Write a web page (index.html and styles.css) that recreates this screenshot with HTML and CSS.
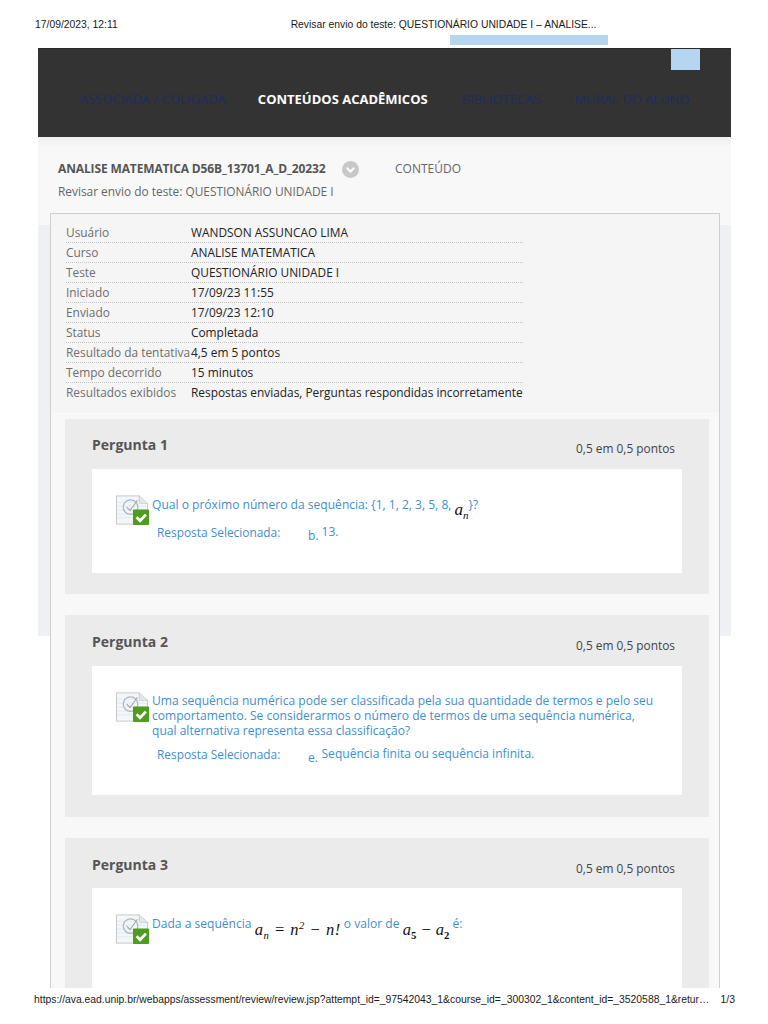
FILE: index.html
```html
<!DOCTYPE html>
<html lang="pt-BR">
<head>
<meta charset="utf-8">
<title>Revisar envio do teste</title>
<link rel="stylesheet" href="styles.css">
</head>
<body>
<svg class="defs" width="0" height="0" aria-hidden="true">
  <symbol id="qicon" viewBox="0 0 36 32">
    <path d="M1.5 1.5H25L33.5 9V30.5H1.5Z" fill="#f4f6f8" stroke="#c4c6c8"/>
    <path d="M25 1.5V9H33.5" fill="#e4e6e8" stroke="#c4c6c8"/>
    <path d="M2 8H32M2 12H32M2 16H32M2 20H32M2 24H32" stroke="#dcebf5"/>
    <circle cx="16" cy="13" r="7.5" fill="none" stroke="#b4b6b8" stroke-width="1.3"/>
    <path d="M12 13l3.5 3.5L23 6" fill="none" stroke="#a8aaac" stroke-width="1.2"/>
    <rect x="18.5" y="15.5" width="16.5" height="16" rx="1" fill="#4f9d1e"/>
    <path d="M22.2 23.5l3.6 3.6 6-6.4" fill="none" stroke="#fff" stroke-width="2.8"/>
  </symbol>
</svg>
<div class="page">
  <header class="print-head">
    <span>17/09/2023, 12:11</span>
    <span class="print-title">Revisar envio do teste: QUESTIONÁRIO UNIDADE I – ANALISE...</span>
    <span class="mark mark-top"></span>
  </header>
  <main class="sheet">
    <nav class="nav">
      <a>ASSOCIADA / COLIGADA</a>
      <a class="active">CONTEÚDOS ACADÊMICOS</a>
      <a>BIBLIOTECAS</a>
      <a>MURAL DO ALUNO</a>
      <span class="mark mark-nav"></span>
    </nav>
    <div class="crumbs">
      <div class="crumb-row">
        <strong>ANALISE MATEMATICA D56B_13701_A_D_20232</strong>
        <svg class="chev" viewBox="0 0 17 17" aria-hidden="true"><circle cx="8.5" cy="8.5" r="8.5" fill="#c8c8c8"/><path d="M4.8 6.8l3.7 3.7 3.7-3.7" fill="none" stroke="#fff" stroke-width="2"/></svg>
        <span class="crumb-link">CONTEÚDO</span>
      </div>
      <div class="crumb-sub">Revisar envio do teste: QUESTIONÁRIO UNIDADE I</div>
    </div>
    <div class="backdrop">
      <section class="panel">
        <dl class="details">
          <div><dt>Usuário</dt><dd>WANDSON ASSUNCAO LIMA</dd></div>
          <div><dt>Curso</dt><dd>ANALISE MATEMATICA</dd></div>
          <div><dt>Teste</dt><dd>QUESTIONÁRIO UNIDADE I</dd></div>
          <div><dt>Iniciado</dt><dd>17/09/23 11:55</dd></div>
          <div><dt>Enviado</dt><dd>17/09/23 12:10</dd></div>
          <div><dt>Status</dt><dd>Completada</dd></div>
          <div><dt>Resultado da tentativa</dt><dd>4,5 em 5 pontos</dd></div>
          <div><dt>Tempo decorrido</dt><dd>15 minutos</dd></div>
          <div><dt>Resultados exibidos</dt><dd>Respostas enviadas, Perguntas respondidas incorretamente</dd></div>
        </dl>
        <div class="questions">
          <article class="q q1">
            <div class="q-head"><h2>Pergunta 1</h2><span>0,5 em 0,5 pontos</span></div>
            <div class="q-body">
              <div class="q-line">
                <svg class="qicon"><use href="#qicon"/></svg>
                <p>Qual o próximo número da sequência: {1, 1, 2, 3, 5, 8, <span class="math an">a<sub>n</sub></span>}?</p>
              </div>
              <div class="answer"><span class="a-label">Resposta Selecionada:</span><span class="a-letter">b.</span><span>13.</span></div>
            </div>
          </article>
          <article class="q q2">
            <div class="q-head"><h2>Pergunta 2</h2><span>0,5 em 0,5 pontos</span></div>
            <div class="q-body">
              <div class="q-line">
                <svg class="qicon"><use href="#qicon"/></svg>
                <p>Uma sequência numérica pode ser classificada pela sua quantidade de termos e pelo seu comportamento. Se considerarmos o número de termos de uma sequência numérica, qual alternativa representa essa classificação?</p>
              </div>
              <div class="answer"><span class="a-label">Resposta Selecionada:</span><span class="a-letter">e.</span><span>Sequência finita ou sequência infinita.</span></div>
            </div>
          </article>
          <article class="q q3">
            <div class="q-head"><h2>Pergunta 3</h2><span>0,5 em 0,5 pontos</span></div>
            <div class="q-body">
              <div class="q-line">
                <svg class="qicon"><use href="#qicon"/></svg>
                <p>Dada a sequência <span class="math big eq1">a<sub>n</sub> <i>=</i> n<sup>2</sup> <i>−</i> n!</span> o valor de <span class="math big">a<sub class="num">5</sub> <i>−</i> a<sub class="num">2</sub></span> é:</p>
              </div>
            </div>
          </article>
        </div>
      </section>
    </div>
  </main>
  <footer class="print-foot">
    <span class="url">https://ava.ead.unip.br/webapps/assessment/review/review.jsp?attempt_id=_97542043_1&amp;course_id=_300302_1&amp;content_id=_3520588_1&amp;retur…</span>
    <span>1/3</span>
  </footer>
</div>
</body>
</html>
```

FILE: styles.css
```css
* { box-sizing: border-box; }
html, body { margin: 0; padding: 0; background: #fff; }
.defs { position: absolute; }
.page {
  width: 768px;
  height: 1024px;
  overflow: hidden;
  display: flex;
  flex-direction: column;
  font-family: "Open Sans", sans-serif;
  font-size: 11.88px;
  color: #333;
  position: relative;
}
.print-head {
  flex: none;
  height: 48px;
  padding: 18px 0 0 35px;
  display: flex;
  font: 10.35px/13px "Liberation Sans", sans-serif;
  color: #1a1a1a;
  position: relative;
}
.print-title { margin-left: 173px; }
.mark { position: absolute; background: #b5d5f0; }
.mark-top { left: 450px; top: 35px; width: 158px; height: 10px; }
.sheet {
  flex: 1;
  min-height: 0;
  overflow: hidden;
  margin: 0 37px 0 38px;
}
.nav {
  height: 89px;
  background: #333;
  border-top: 1px solid #2a2a2a;
  padding: 40px 0 0 42px;
  display: flex;
  gap: 32px;
  font-size: 13px;
  line-height: 20px;
  color: #1d2c66;
  position: relative;
}
.nav .active { color: #fff; font-weight: 700; margin-right: 2px; }
.nav a:nth-child(4) { margin-left: 2px; }
.mark-nav { right: 31px; top: 0; width: 29px; height: 21px; }
.crumbs {
  height: 88px;
  background: linear-gradient(#eeeeee, #f8f8f8 10px);
  padding: 23px 0 0 20px;
  line-height: 18px;
  color: #666;
}
.crumb-row { display: flex; align-items: center; font-size: 12px; }
.crumb-row strong { color: #555; font-weight: 700; letter-spacing: -.13px; width: 284px; white-space: nowrap; }
.chev { width: 17px; height: 17px; }
.crumb-link { margin-left: 36px; }
.crumb-sub { margin-top: 4px; }
.backdrop {
  display: flow-root;
  background: #eef0f4;
  height: 411px;
  padding: 0 11px 0 12px;
}
.panel {
  height: 790px;
  margin-top: -12px;
  position: relative;
  background: #f8f8f8;
  border: 1px solid #cfcfcf;
  border-bottom: 0;
}
.details {
  margin: 0;
  padding: 9px 0 0 15px;
  height: 200px;
  width: 100%;
  background: #f5f5f5;
  border-bottom: 1px solid #fafafa;
}
.details div {
  display: flex;
  width: 457px;
  height: 20px;
  line-height: 19px;
  border-bottom: 1px dotted #c4c4c4;
  white-space: nowrap;
}
.details div:last-child { border-bottom: 0; }
.details dt { width: 125px; color: #6e6e6e; flex: none; }
.details dd { margin: 0; color: #222; }
.questions { padding: 5px 10px 0 14px; }
.q { background: #ebebeb; margin-bottom: 21px; padding: 0 27px; }
.q1 { height: 175px; }
.q2 { height: 202px; }
.q3 { height: 300px; }
.q-head {
  height: 50px;
  display: flex;
  justify-content: space-between;
  align-items: flex-start;
  padding: 17px 7px 0 0;
  color: #444;
}
.q2 .q-head { height: 51px; padding-top: 18px; }
.q3 .q-head { padding-top: 18px; }
.q-head span { margin-top: 3px; line-height: 18px; }
.q-head h2 { margin: 0; font-size: 14px; line-height: 18px; color: #555; font-weight: 700; }
.q-body { background: #fff; padding: 25px 24px 0 23px; color: #3f8fd0; font-size: 12.07px; }
.q1 .q-body { height: 104px; }
.q2 .q-body { height: 129px; }
.q3 .q-body { height: 200px; }
.q-line { display: flex; gap: 2px; align-items: flex-start; }
.qicon { flex: none; width: 35px; height: 32px; }
.q-line p { margin: 0; padding-top: 2px; line-height: 15px; width: 510px; }
.math { color: #111; font-family: "Liberation Serif", serif; font-style: italic; }
.math sub, .math sup { font-size: 65%; line-height: 0; }
.math .num { font-style: normal; font-weight: 700; }
.math i { font-style: normal; font-weight: 400; padding: 0 1px; }
.an { font-size: 17px; position: relative; top: 6px; }
.big { font-size: 16.5px; position: relative; top: 7px; }
.eq1 { letter-spacing: .5px; }
.answer { display: flex; margin: -3px 0 0 42px; line-height: 18px; }
.a-label { width: 151px; font-size: 11.9px; }
.a-letter { width: 13.5px; position: relative; top: 4px; }
.q2 .answer { margin-top: 7px; }
.print-foot {
  flex: none;
  height: 36px;
  background: #fff;
  padding: 5px 33px 0 34px;
  display: flex;
  justify-content: space-between;
  font: 10.35px/13px "Liberation Sans", sans-serif;
  color: #1a1a1a;
}
.url { white-space: nowrap; }
```
